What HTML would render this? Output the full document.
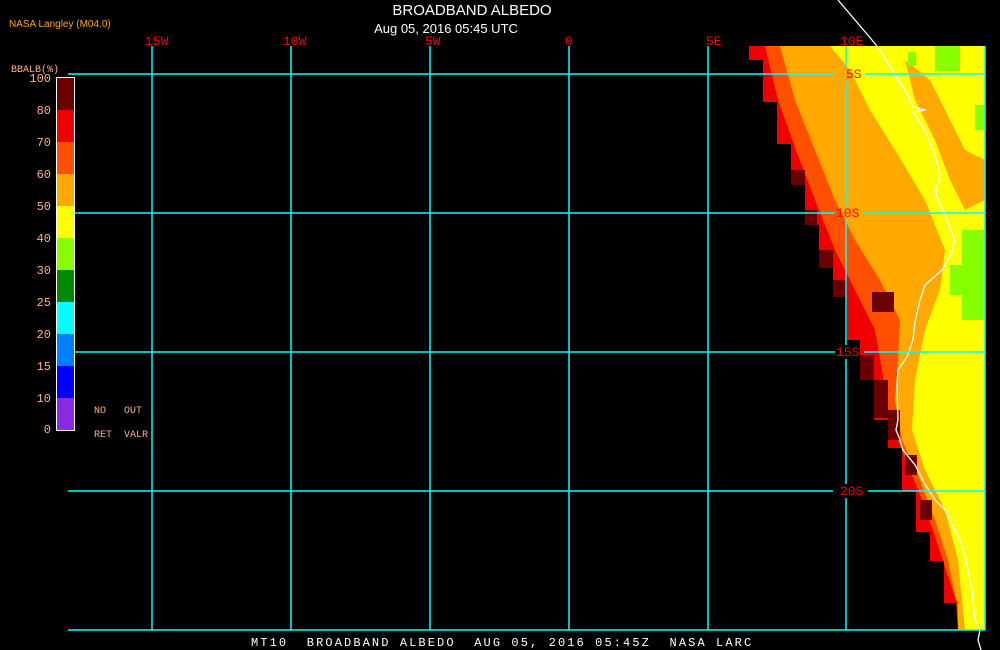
<!DOCTYPE html>
<html><head><meta charset="utf-8"><style>
html,body{margin:0;padding:0;background:#000;width:1000px;height:650px;overflow:hidden}
svg{display:block}
</style></head><body>
<svg width="1000" height="650" viewBox="0 0 1000 650" xmlns="http://www.w3.org/2000/svg" font-family="Liberation Mono, monospace">
<rect width="1000" height="650" fill="#000"/>
<!-- land -->
<polygon fill="#ffff00" points="749,46 985,46 985,630 958,630 958,603 944,603 944,561 930,561 930,532 916,532 916,491 902,491 902,448 888,448 888,420 874,420 874,380 860,380 860,340 847,340 847,297 833,297 833,268 819,268 819,225 805,225 805,185 791,185 791,144 777,144 777,102 763,102 763,60 749,60"/>
<polygon fill="#ffa800" points="749,46 830,46 850,70 870,110 895,150 925,200 945,250 940,290 925,330 915,380 912,430 925,470 945,510 958,560 965,630 958,630 958,603 944,603 944,561 930,561 930,532 916,532 916,491 902,491 902,448 888,448 888,420 874,420 874,380 860,380 860,340 847,340 847,297 833,297 833,268 819,268 819,225 805,225 805,185 791,185 791,144 777,144 777,102 763,102 763,60 749,60"/>
<polygon fill="#ffa800" points="905,60 930,80 950,120 965,150 985,160 985,200 965,210 950,180 935,140 915,100"/>
<polygon fill="#ff5000" points="749,46 780,46 795,100 815,150 835,200 855,240 880,280 900,320 898,360 895,400 902,440 920,480 935,520 948,560 956,600 958,630 958,603 944,603 944,561 930,561 930,532 916,532 916,491 902,491 902,448 888,448 888,420 874,420 874,380 860,380 860,340 847,340 847,297 833,297 833,268 819,268 819,225 805,225 805,185 791,185 791,144 777,144 777,102 763,102 763,60 749,60"/>
<polygon fill="#f00000" points="749,46 765,46 778,100 796,150 815,200 835,250 855,290 875,330 882,370 888,410 898,440 910,470 922,500 933,530 946,570 956,600 958,603 944,603 944,561 930,561 930,532 916,532 916,491 902,491 902,448 888,448 888,420 874,420 874,380 860,380 860,340 847,340 847,297 833,297 833,268 819,268 819,225 805,225 805,185 791,185 791,144 777,144 777,102 763,102 763,60 749,60"/>
<g fill="#6a0000">
<rect x="791" y="170" width="14" height="15"/><rect x="805" y="210" width="12" height="15"/>
<rect x="819" y="250" width="14" height="18"/><rect x="833" y="280" width="14" height="17"/>
<rect x="860" y="355" width="14" height="25"/><rect x="874" y="380" width="14" height="38"/>
<rect x="888" y="410" width="12" height="30"/><rect x="872" y="292" width="22" height="20"/>
<rect x="905" y="455" width="12" height="20"/><rect x="920" y="500" width="12" height="20"/>
</g>
<g fill="#88ff00">
<rect x="962" y="230" width="23" height="90"/><rect x="950" y="265" width="12" height="30"/>
<rect x="935" y="46" width="25" height="25"/><rect x="908" y="52" width="8" height="14"/>
<rect x="975" y="105" width="10" height="25"/>
</g>
<!-- coast -->
<polyline fill="none" stroke="#fff" stroke-width="1.3" points="838,0 855,20 872,40 880,50 895,75 905,90 910,100 913,107 926,110 913,112 925,130 935,155 940,175 936,190 937,198 945,215 955,240 951,255 942,270 925,285 920,300 915,322 913,340 907,357 898,370 897,385 898,420 896,430 900,440 903,450 915,465 925,484 935,500 945,510 960,540 965,555 972,590 975,620 980,630 978,640 981,650"/>
<!-- grid -->
<g stroke="#00ffff" stroke-width="1.5" fill="none">
<line x1="68" y1="74" x2="835" y2="74"/><line x1="865" y1="74" x2="985" y2="74"/>
<line x1="68" y1="213" x2="835" y2="213"/><line x1="864" y1="213" x2="985" y2="213"/>
<line x1="68" y1="352" x2="835" y2="352"/><line x1="864" y1="352" x2="985" y2="352"/>
<line x1="68" y1="491" x2="833" y2="491"/><line x1="868" y1="491" x2="985" y2="491"/>
<line x1="68" y1="630" x2="985" y2="630"/>
<line x1="152" y1="46" x2="152" y2="630"/><line x1="291" y1="46" x2="291" y2="630"/>
<line x1="430" y1="46" x2="430" y2="630"/><line x1="569" y1="46" x2="569" y2="630"/>
<line x1="708" y1="46" x2="708" y2="630"/>
<line x1="846" y1="46" x2="846" y2="67"/><line x1="846" y1="81" x2="846" y2="206"/><line x1="846" y1="220" x2="846" y2="345"/><line x1="846" y1="359" x2="846" y2="484"/><line x1="846" y1="498" x2="846" y2="630"/>
<line x1="985" y1="46" x2="985" y2="630"/>
</g>
<g fill="#ff0000" font-size="13">
<text x="145" y="45">15W</text><text x="283" y="45">10W</text><text x="425" y="45">5W</text>
<text x="565" y="45">0</text><text x="706" y="45">5E</text><text x="840" y="45">10E</text>
<text x="846" y="78">5S</text><text x="836" y="217">10S</text><text x="836" y="356">15S</text><text x="840" y="495">20S</text>
</g>
<!-- title -->
<text x="472" y="15" fill="#fff" font-size="15" text-anchor="middle" font-family="Liberation Sans, sans-serif">BROADBAND ALBEDO</text>
<text x="446" y="33" fill="#fff" font-size="13" text-anchor="middle" font-family="Liberation Sans, sans-serif">Aug 05, 2016 05:45 UTC</text>
<text x="9" y="27" fill="#ffa800" font-size="10" font-family="Liberation Sans, sans-serif">NASA Langley (M04.0)</text>
<!-- colorbar -->
<g>
<rect x="56" y="77" width="18" height="33" fill="#6a0000"/>
<rect x="56" y="110" width="18" height="32" fill="#f00000"/>
<rect x="56" y="142" width="18" height="32" fill="#ff5000"/>
<rect x="56" y="174" width="18" height="32" fill="#ffa800"/>
<rect x="56" y="206" width="18" height="32" fill="#ffff00"/>
<rect x="56" y="238" width="18" height="32" fill="#88ff00"/>
<rect x="56" y="270" width="18" height="32" fill="#008800"/>
<rect x="56" y="302" width="18" height="32" fill="#00ffff"/>
<rect x="56" y="334" width="18" height="32" fill="#0080ff"/>
<rect x="56" y="366" width="18" height="32" fill="#0000ff"/>
<rect x="56" y="398" width="18" height="32" fill="#8a2be2"/>
<rect x="56.5" y="77.5" width="18" height="353" fill="none" stroke="#fff" stroke-width="1"/>
</g>
<g fill="#ffb080" font-size="12" text-anchor="end">
<text x="51" y="82">100</text><text x="51" y="114">80</text><text x="51" y="146">70</text>
<text x="51" y="178">60</text><text x="51" y="210">50</text><text x="51" y="242">40</text>
<text x="51" y="274">30</text><text x="51" y="306">25</text><text x="51" y="338">20</text>
<text x="51" y="370">15</text><text x="51" y="402">10</text><text x="51" y="433">0</text>
</g>
<g fill="#ffb080" font-size="10">
<text x="11" y="72">BBALB(%)</text>
<text x="94" y="413">NO</text><text x="124" y="413">OUT</text>
<text x="94" y="437">RET</text><text x="124" y="437">VALR</text>
</g>
<text x="251" y="646" fill="#fff" font-size="12" letter-spacing="2.1" xml:space="preserve">MT10  BROADBAND ALBEDO  AUG 05, 2016 05:45Z  NASA LARC</text>
</svg>
</body></html>
